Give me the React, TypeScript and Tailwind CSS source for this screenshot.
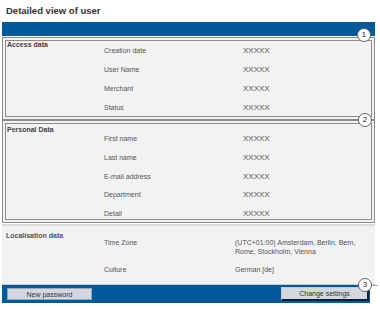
import React from 'react'

const font = "font-['Liberation_Sans',Arial,sans-serif]"

function Row({ label, value, valueClass = 'pl-[139px]' }: { label: string; value: string; valueClass?: string }) {
  return (
    <div className="relative h-[10px] flex items-center">
      <span className="absolute left-0 text-[7px] leading-[10px] text-[#555]">{label}</span>
      <span className={`${valueClass} text-[8px] leading-[10px] text-[#555]`}>{value}</span>
    </div>
  )
}

function Marker({ n, className }: { n: number; className: string }) {
  return (
    <div
      className={`absolute w-[14px] h-[14px] rounded-full bg-white border border-[#666] flex items-center justify-center text-[8px] leading-none text-[#222] ${className}`}
    >
      {n}
    </div>
  )
}

export default function App() {
  return (
    <div className={`relative w-[380px] h-[309px] bg-white ${font}`}>
      {/* Title */}
      <div className="h-[22px] pl-[6px] pt-[6px] text-[9.5px] font-bold leading-[10px] text-[#333]">
        Detailed view of user
      </div>
      <div className="ml-[2px] w-[373px] h-[14px] bg-[#00599a]" />

      {/* Access data */}
      <div className="mt-[1px] ml-[2px] w-[373px] h-[83px] border-4 border-double border-[#8c8c8c] bg-[#f2f2f2] flex">
        <div className="w-[98px] text-[7px] font-bold leading-[8px] text-[#444] pl-[1px]">Access data</div>
        <div className="flex-1 flex flex-col gap-[9px] pt-[4.5px]">
          <Row label="Creation date" value="XXXXX" />
          <Row label="User Name" value="XXXXX" />
          <Row label="Merchant" value="XXXXX" />
          <Row label="Status" value="XXXXX" />
        </div>
      </div>

      {/* Personal data */}
      <div className="ml-[2px] w-[373px] h-[103px] border-4 border-double border-[#8c8c8c] bg-[#f2f2f2] flex">
        <div className="w-[98px] pt-[2px] text-[7px] font-bold leading-[8px] text-[#444] pl-[1px]">Personal Data</div>
        <div className="flex-1 flex flex-col gap-[8.75px] pt-[10px]">
          <Row label="First name" value="XXXXX" />
          <Row label="Last name" value="XXXXX" />
          <Row label="E-mail address" value="XXXXX" />
          <Row label="Department" value="XXXXX" />
          <Row label="Detail" value="XXXXX" />
        </div>
      </div>

      {/* Localisation */}
      <div className="mt-[1px] ml-[2px] w-[373px] h-[61px] border-t-2 border-b border-t-[#dcdcdc] border-b-[#c8c8c8] bg-[#f2f2f2] flex">
        <div className="w-[102px] pl-[4px] pt-[6px] text-[7px] font-bold leading-[8px] text-[#555]">Localisation data</div>
        <div className="flex-1 pt-[13px] text-[7px] leading-[8.5px] text-[#555]">
          <div className="flex">
            <span className="w-[131px]">Time Zone</span>
            <span className="w-[130px]">
              (UTC+01:00) Amsterdam, Berlin, Bern,
              <br />
              Rome, Stockholm, Vienna
            </span>
          </div>
          <div className="flex mt-[10px]">
            <span className="w-[131px]">Culture</span>
            <span>German [de]</span>
          </div>
        </div>
      </div>

      {/* Footer bar */}
      <div className="ml-[2px] w-[368px] h-[18px] bg-[#00599a] flex items-center justify-between pl-[5px] pr-[1px]">
        <button className="w-[85px] h-[12px] bg-[#d3d7df] border border-[#9aa6b8] text-[7px] leading-none text-[#333]">
          New password
        </button>
        <button className="w-[88px] h-[14px] bg-[#d3d7df] border border-[#c9ced8] border-r-2 border-b-2 border-r-[#0b1e3c] border-b-[#0b1e3c] text-[7px] leading-none text-[#333]">
          Change settings
        </button>
      </div>

      {/* Callouts */}
      <Marker n={1} className="left-[357px] top-[28px]" />
      <Marker n={2} className="left-[358px] top-[113px]" />
      <Marker n={3} className="left-[358px] top-[278px]" />
      <div className="absolute left-[372px] top-[285px] w-[6px] h-px bg-[#aaa]" />
    </div>
  )
}
